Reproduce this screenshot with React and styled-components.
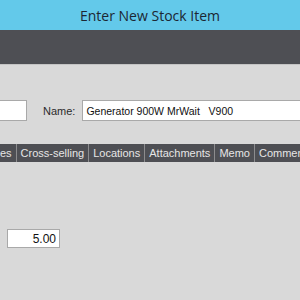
import React from "react";
import styled, { createGlobalStyle } from "styled-components";

const Global = createGlobalStyle`
  html, body {
    margin: 0;
    padding: 0;
    background: #d9d9d9;
  }
`;

const Window = styled.div`
  width: 300px;
  height: 300px;
  overflow: hidden;
  background: #d9d9d9;
  font-family: "Liberation Sans", Arial, sans-serif;
  display: flex;
  flex-direction: column;
`;

const TitleBar = styled.div`
  height: 30px;
  background: #63c9ea;
  color: #1c2733;
  font-family: "Open Sans", "Noto Sans", sans-serif;
  font-size: 14px;
  display: flex;
  align-items: center;
  justify-content: center;
  flex-shrink: 0;
`;

const ToolBar = styled.div`
  height: 34px;
  background: #4e4f54;
  border-bottom: 1px solid #c4c4c4;
  flex-shrink: 0;
`;

const Body = styled.div`
  padding-top: 35px;
  display: flex;
  flex-direction: column;
`;

const FieldRow = styled.div`
  display: flex;
  align-items: center;
  height: 21px;
  margin-top: ${(p) => p.mt || 0}px;
  white-space: nowrap;
`;

const TextInput = styled.div`
  box-sizing: border-box;
  height: ${(p) => p.h || 21}px;
  width: ${(p) => p.w}px;
  margin-left: ${(p) => p.ml || 0}px;
  background: #fff;
  border: 1px solid #a9a9a9;
  font-size: ${(p) => p.fs || 11}px;
  color: #111;
  display: flex;
  align-items: center;
  justify-content: ${(p) => (p.right ? "flex-end" : "flex-start")};
  padding: 0 3px;
  flex-shrink: 0;
`;

const Label = styled.span`
  font-size: 11px;
  color: #2b2b2b;
  margin: 0 7px 0 16px;
`;

const Tabs = styled.div`
  display: flex;
  height: 18px;
  margin-top: 23px;
  margin-left: -23px;
  background: #4e4f54;
  white-space: nowrap;
`;

const Tab = styled.div`
  color: #e6e6e6;
  font-size: 11px;
  padding: 0 4px;
  display: flex;
  align-items: center;
  border-right: 1px solid #8c8c8e;
  flex-shrink: 0;
`;

const tabs = ["Prices", "Cross-selling", "Locations", "Attachments", "Memo", "Comments", "History"];

export default function App() {
  return (
    <Window>
      <Global />
      <TitleBar>Enter New Stock Item</TitleBar>
      <ToolBar />
      <Body>
        <FieldRow>
          <TextInput w={67} ml={-40} />
          <Label>Name:</Label>
          <TextInput w={240} fs={10.5}>
            Generator 900W MrWait&nbsp;&nbsp; V900
          </TextInput>
        </FieldRow>
        <Tabs>
          {tabs.map((t) => (
            <Tab key={t}>{t}</Tab>
          ))}
        </Tabs>
        <FieldRow mt={66}>
          <TextInput w={53} h={19} ml={7} fs={12} right>
            5.00
          </TextInput>
        </FieldRow>
      </Body>
    </Window>
  );
}
